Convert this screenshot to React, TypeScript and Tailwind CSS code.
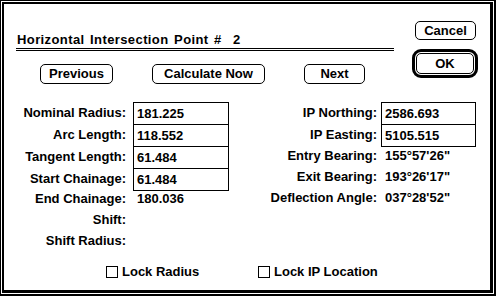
import React from "react";

function Btn({ w, children }: { w: string; children: React.ReactNode }) {
  return (
    <div
      className={`${w} h-[20px] border border-black rounded-[5px] flex items-center justify-center leading-[16px]`}
    >
      {children}
    </div>
  );
}

type RowP = {
  label: string;
  value?: string;
  box?: boolean;
  lw: string;
  gap: string;
  bw: string;
  extra?: string;
};

function Row({ label, value, box, lw, gap, bw, extra }: RowP) {
  return (
    <div className={`flex ${box ? "h-[22px]" : "h-[21px]"} ${extra ?? ""}`}>
      <div className={`${lw} shrink-0 text-right ${box ? "leading-[22px]" : "leading-[21px]"} whitespace-nowrap`}>
        {label}
      </div>
      {box ? (
        <div className={`${gap} ${bw} shrink-0 h-[23px] border border-black pl-[3px] leading-[21px]`}>
          {value}
        </div>
      ) : (
        <div className={`${gap} ${bw} shrink-0 pl-[4px] leading-[21px] whitespace-nowrap`}>{value}</div>
      )}
    </div>
  );
}

function Check({ label }: { label: string }) {
  return (
    <div className="flex items-center h-[16px]">
      <div className="w-[12px] h-[12px] border border-black shrink-0" />
      <div className="ml-[4px] whitespace-nowrap leading-[16px]">{label}</div>
    </div>
  );
}

export default function App() {
  const L = { lw: "w-[122px]", gap: "ml-[7px]", bw: "w-[96px]" };
  const R = { lw: "w-[148px]", gap: "ml-[4px]", bw: "w-[95px]" };
  return (
    <div className="w-[496px] h-[296px] bg-white border-black border-t border-l border-r-2 border-b-2 p-px font-['Liberation_Sans',Arial,sans-serif] font-bold text-[13px] leading-[16px] text-black">
      <div className="h-full border-black border-t-2 border-l-2 border-r-[3px] border-b-[3px] flex flex-col">
        <div className="flex">
          <div className="ml-[12px] w-[378px] pt-[28px]">
            <div className="flex whitespace-pre pl-px tracking-[0.4px]">
              <span className="w-[216px] shrink-0 [word-spacing:1.5px]">Horizontal Intersection Point #</span>
              <span>2</span>
            </div>
            <div className="h-[3px] border-t border-b border-black" />
            <div className="flex mt-[13px] ml-[24px] gap-[39px]">
              <Btn w="w-[73px]">Previous</Btn>
              <Btn w="w-[113px]">Calculate Now</Btn>
              <Btn w="w-[61px]">Next</Btn>
            </div>
          </div>
          <div className="ml-[18px] pt-[17px] flex flex-col">
            <div className="ml-[3px] w-[61px] h-[19px] border border-black rounded-[5px] flex items-center justify-center">
              Cancel
            </div>
            <div className="mt-[9px] w-[66px] h-[29px] border-[3px] border-black rounded-[9px] p-px">
              <div className="w-full h-full border border-black rounded-[5px] flex items-center justify-center">
                OK
              </div>
            </div>
          </div>
        </div>

        <div className="flex mt-[18px]">
          <div className="flex flex-col">
            <Row label="Nominal Radius:" value="181.225" box {...L} />
            <Row label="Arc Length:" value="118.552" box {...L} />
            <Row label="Tangent Length:" value="61.484" box {...L} />
            <Row label="Start Chainage:" value="61.484" box {...L} />
            <Row label="End Chainage:" value="180.036" extra="-mt-[2px]" {...L} />
            <Row label="Shift:" {...L} />
            <Row label="Shift Radius:" {...L} />
          </div>
          <div className="flex flex-col">
            <Row label="IP Northing:" value="2586.693" box {...R} />
            <Row label="IP Easting:" value="5105.515" box {...R} />
            <Row label="Entry Bearing:" value={"155°57'26\""} extra="-mt-px" {...R} />
            <Row label="Exit Bearing:" value={"193°26'17\""} {...R} />
            <Row label="Deflection Angle:" value={"037°28'52\""} {...R} />
          </div>
        </div>

        <div className="flex mt-[13px] ml-[102px]">
          <div className="w-[152px]">
            <Check label="Lock Radius" />
          </div>
          <Check label="Lock IP Location" />
        </div>
      </div>
    </div>
  );
}
